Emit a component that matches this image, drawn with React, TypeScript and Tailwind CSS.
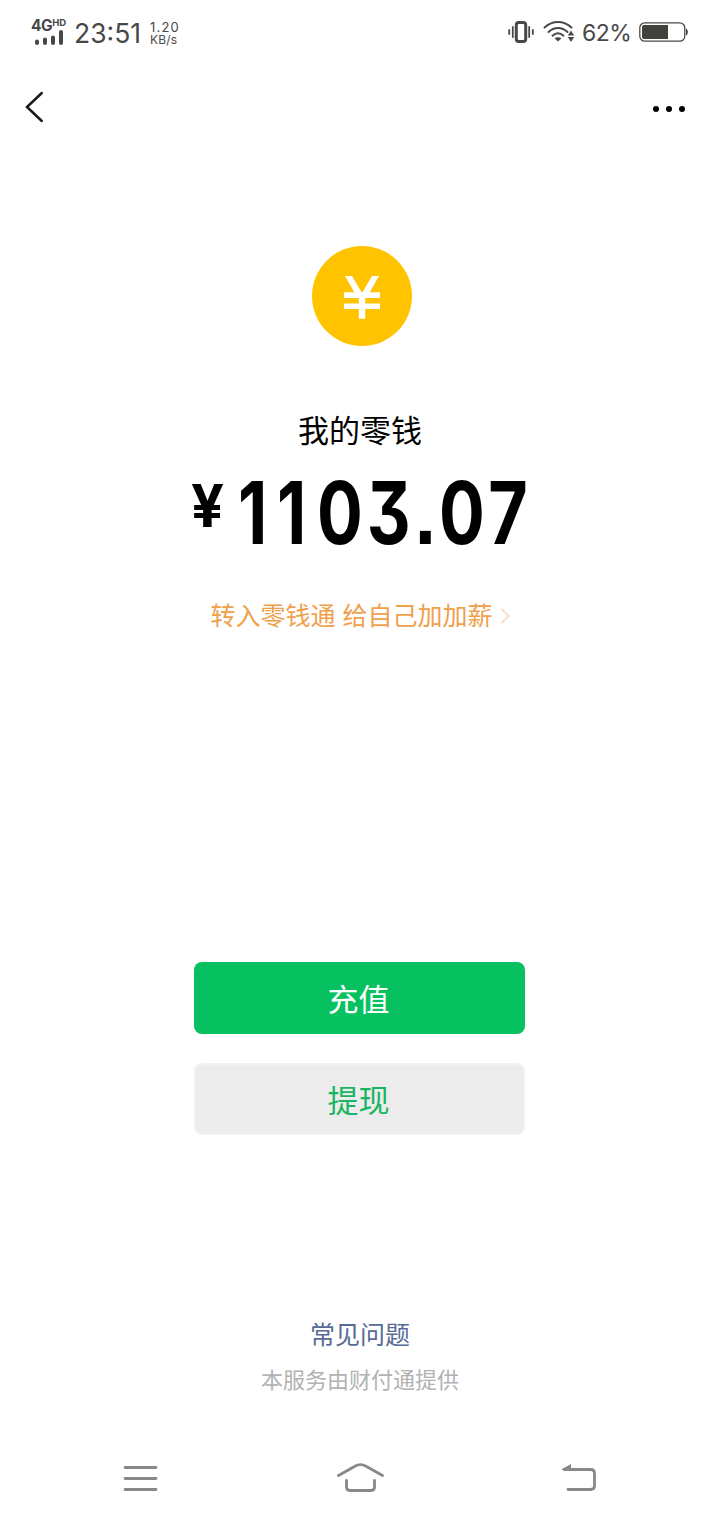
import type { ReactNode } from "react"

const SignalIcon = () => (
  <svg width="30" height="18" viewBox="0 0 30 18" className="text-[#484848]" stroke="currentColor" strokeWidth="4" strokeLinecap="round">
    <path d="M3 13.500v1.500M11 11.500v3.500M19 9.500v5.500M27 4v11" />
  </svg>
)

const VibrateIcon = () => (
  <svg width="26" height="24" viewBox="0 0 26 24" fill="none" stroke="#484848" strokeLinecap="round">
    <rect x="8.300" y="2.500" width="9.400" height="19" rx="2.500" strokeWidth="3" />
    <path d="M4.800 7v10M21.200 7v10M1.200 10v4M24.800 10v4" strokeWidth="1.800" />
  </svg>
)

const WifiIcon = () => (
  <svg width="32" height="22" viewBox="0 0 32 22" fill="none" stroke="#484848" strokeWidth="2" strokeLinecap="round">
    <path d="M1.500 6.500C9.500-.7 20.500-.7 28.500 6.500" />
    <path d="M5.500 11c5.800-5.300 13.200-5.300 19 0" />
    <path d="M9.500 14.700c3.400-3 7.600-3 11 0" />
    <path d="M11.500 17.300c2.200-1.500 4.800-1.500 7 0L15 20.500z" fill="#484848" stroke="none" />
    <path d="M28 9.500l3.200 5h-6.400zM28 21l3.200-5h-6.400z" fill="#484848" stroke="none" />
  </svg>
)

const BatteryIcon = () => (
  <svg width="50" height="20" viewBox="0 0 50 20" fill="none">
    <rect x=".8" y=".8" width="45" height="18.400" rx="5" stroke="#484848" strokeWidth="1.300" />
    <path d="M5 3h24v14H5a2 2 0 0 1-2-2V5a2 2 0 0 1 2-2z" fill="#42423d" />
    <path d="M47 6.500c2.500 1 2.500 6 0 7z" fill="#484848" />
  </svg>
)

const CoinIcon = () => (
  <svg width="100" height="100" viewBox="0 0 100 100">
    <circle cx="50" cy="50" r="50" fill="#ffc300" />
    <g fill="#fff">
      <path d="M33 30h7l10 17 10-17h7L55 51H45z" />
      <path d="M32 46.300h36v5.700H32zM32 57.500h36v5.500H32zM46.800 47h6.400v25.700h-6.400z" />
    </g>
  </svg>
)

const StatusBar = () => (
  <header className="flex h-16 items-center justify-between pl-[31px] pr-[31px] text-[#484848]">
    <div className="flex items-center">
      <div className="flex w-[43px] flex-col">
        <div className="flex h-[14px] items-start text-[15.500px] font-bold leading-[15px] tracking-[-0.5px]">
          4G<span className="text-[9.500px] leading-[10px] tracking-normal">HD</span>
        </div>
        <div className="-mt-[4px] pl-[3px]">
          <SignalIcon />
        </div>
      </div>
      <span className="w-[76px] pt-[2px] text-[26.500px] leading-8">23:51</span>
      <div className="pt-[2px]">
        <div className="text-[13px] leading-[13px] tracking-[1.200px]">1.20</div>
        <div className="text-[12px] leading-[12px] tracking-[0.200px]">KB/s</div>
      </div>
    </div>
    <div className="flex items-center">
      <VibrateIcon />
      <span className="ml-[9px]">
        <WifiIcon />
      </span>
      <span className="ml-[7px] w-[57px] pt-[1px] text-[23px] leading-7 tracking-[-0.5px]">62%</span>
      <BatteryIcon />
    </div>
  </header>
)

const NavBar = () => (
  <nav className="flex h-[86px] items-center justify-between pl-[25px] pr-[35px]">
    <button aria-label="返回">
      <svg width="20" height="32" viewBox="0 0 20 32" fill="none" stroke="#191919" strokeWidth="2.500">
        <path d="M16.800 2L2 16l14.800 14" strokeLinecap="round" />
      </svg>
    </button>
    <button aria-label="更多" className="flex gap-[7px] pt-[3px]">
      <i className="size-[6px] rounded-full bg-black" />
      <i className="size-[6px] rounded-full bg-black" />
      <i className="size-[6px] rounded-full bg-black" />
    </button>
  </nav>
)

// each figure sits in its own cell, the face is wider set than Inter
const balance = [
  { char: "1", cell: "w-[38px]" },
  { char: "1", cell: "w-[39px]" },
  { char: "0", cell: "w-[57px]" },
  { char: "3", cell: "w-[42px]" },
  { char: ".", cell: "w-[30px]" },
  { char: "0", cell: "w-[43px]" },
  { char: "7", cell: "w-[50px]" },
]

const Balance = () => (
  <div className="mt-4 flex h-[86px] w-[338px] items-start text-black">
    <span className="w-[43px] shrink-0 text-[59px] font-bold leading-[72px]">
      <span className="inline-block origin-left scale-x-[0.980]">¥</span>
    </span>
    {balance.map(({ char, cell }, i) => (
      <span
        key={i}
        className={`flex shrink-0 justify-center text-[86px] font-bold leading-[87px] [font-feature-settings:'cv09','ss07'] ${cell}`}
      >
        <span className="shrink-0 scale-x-[0.790]">{char}</span>
      </span>
    ))}
  </div>
)

const ActionButton = ({ className, children }: { className: string; children: ReactNode }) => (
  <button className={`h-[72px] w-[331px] rounded-[8px] pt-[2px] pr-[2px] text-[31px] leading-none ${className}`}>
    {children}
  </button>
)

const SystemNav = () => (
  <footer className="flex h-[60px] items-start justify-between px-[123px] text-[#888]">
    <svg width="35" height="34" viewBox="0 0 35 34" stroke="currentColor" strokeWidth="2.800" strokeLinecap="round">
      <path d="M2 7.500h31M2 18.500h31M2 29.500h31" />
    </svg>
    <svg width="48" height="34" viewBox="0 0 48 34" fill="none" stroke="currentColor" strokeWidth="2.800" strokeLinecap="round">
      <path d="M2.500 15.500L19 6.200q5.500-3 11 0L46.500 15.500" />
      <path d="M10.500 20.500v6.500q0 3.500 3.500 3.500h21q3.500 0 3.500-3.500V20.500" />
    </svg>
    <svg width="36" height="34" viewBox="0 0 36 34" fill="none" stroke="currentColor" strokeWidth="2.800" strokeLinecap="round">
      <path d="M3 9.500h26.500q4 0 4 4V26q0 3.500-4 3.500H7" />
      <path d="M0 9.500L10 4v5.500z" fill="currentColor" stroke="none" />
    </svg>
  </footer>
)

export default function App() {
  return (
    <div className="flex h-[1520px] w-[720px] flex-col bg-white font-[Inter,'Noto_Sans_CJK_SC',sans-serif] whitespace-nowrap">
      <StatusBar />
      <NavBar />

      <main className="flex flex-1 flex-col items-center pt-24">
        <div className="pl-1">
          <CoinIcon />
        </div>
        <h1 className="mt-[62px] text-[31px] leading-[46px] text-black">我的零钱</h1>

        <Balance />

        <a className="mt-[41px] flex items-center text-[25px] leading-[38px] text-[#f0a04b]">
          转入零钱通 给自己加加薪
          <svg width="10" height="16" viewBox="0 0 10 16" fill="none" stroke="#fadcc4" strokeWidth="2" className="ml-[7px]">
            <path d="M1.500 1l7 7-7 7" />
          </svg>
        </a>

        <div className="mt-[327px] flex flex-col gap-[29px] pr-[1px]">
          <ActionButton className="bg-[#07c160] text-white">充值</ActionButton>
          <ActionButton className="border-2 border-[#f1f1f1] bg-[#ececec] text-[#18b562]">提现</ActionButton>
        </div>

        <a className="mt-[181px] text-[25px] leading-[38px] text-[#576b95]">常见问题</a>
        <p className="mt-[9px] text-[22px] leading-[34px] text-[#b2b2b2]">本服务由财付通提供</p>
      </main>

      <SystemNav />
    </div>
  )
}
